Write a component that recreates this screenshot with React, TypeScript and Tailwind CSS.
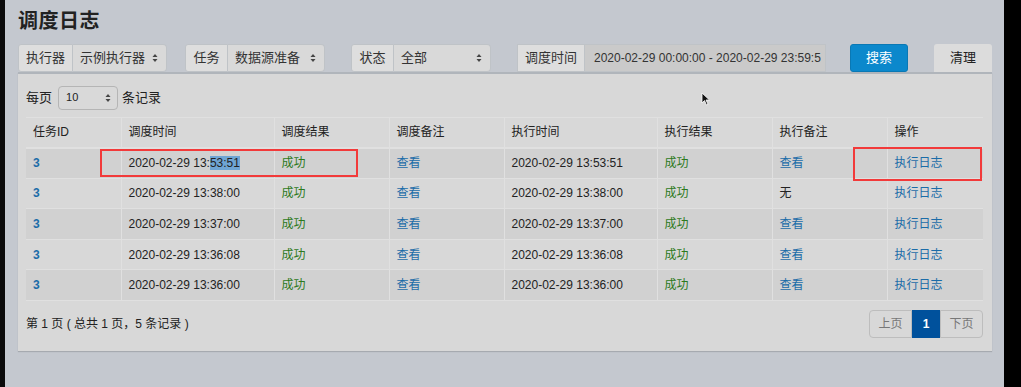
import React from 'react';

const rows = [
  { id: '3', trigger: '2020-02-29 13:53:51', handle: '2020-02-29 13:53:51', note: '查看' },
  { id: '3', trigger: '2020-02-29 13:38:00', handle: '2020-02-29 13:38:00', note: '无' },
  { id: '3', trigger: '2020-02-29 13:37:00', handle: '2020-02-29 13:37:00', note: '查看' },
  { id: '3', trigger: '2020-02-29 13:36:08', handle: '2020-02-29 13:36:08', note: '查看' },
  { id: '3', trigger: '2020-02-29 13:36:00', handle: '2020-02-29 13:36:00', note: '查看' },
];

const cols = ['w-[95px]', 'w-[153px]', 'w-[115px]', 'w-[115px]', 'w-[153px]', 'w-[115px]', 'w-[115px]', 'w-[96px]'];
const heads = ['任务ID', '调度时间', '调度结果', '调度备注', '执行时间', '执行结果', '执行备注', '操作'];

function Arrows() {
  return (
    <svg width="6" height="10" viewBox="0 0 6 10" className="shrink-0">
      <path d="M3 1 L5.5 4 H0.5 Z" fill="#444" />
      <path d="M3 9 L5.5 6 H0.5 Z" fill="#444" />
    </svg>
  );
}

function SelectGroup({ label, value, labelW, selW }: { label: string; value: string; labelW: string; selW: string }) {
  return (
    <div className="flex h-[28px] text-[13px] text-[#333]">
      <div className={`${labelW} flex items-center justify-center bg-[#dedede] border border-[#bfc3c7] rounded-l-[3px]`}>{label}</div>
      <div className={`${selW} flex items-center justify-between pl-[7px] pr-[8px] bg-[#d9d9d9] border border-l-0 border-[#bfc3c7] rounded-r-[4px]`}>
        <span>{value}</span>
        <Arrows />
      </div>
    </div>
  );
}

export default function App() {
  return (
    <div className="flex h-[387px] w-[1021px] overflow-hidden bg-black font-['Liberation_Sans','Noto_Sans_CJK_SC',sans-serif]">
      <div className="w-[5px] shrink-0 bg-[#0a0a0a]" />
      <div className="relative w-[999px] shrink-0 bg-[#c4c8cf] pl-[13px]">
        <h1 className="pt-[8px] h-[44px] text-[20px] leading-[26px] font-bold text-[#222] tracking-[0.5px]">调度日志</h1>

        <div className="flex h-[28px] items-start">
          <SelectGroup label="执行器" value="示例执行器" labelW="w-[55px]" selW="w-[94px]" />
          <div className="ml-[18px]">
            <SelectGroup label="任务" value="数据源准备" labelW="w-[43px]" selW="w-[97px]" />
          </div>
          <div className="ml-[26px]">
            <SelectGroup label="状态" value="全部" labelW="w-[43px]" selW="w-[97px]" />
          </div>
          <div className="ml-[26px] flex h-[28px] text-[13px] text-[#333]">
            <div className="w-[68px] flex items-center justify-center bg-[#dedede] border border-[#bfc3c7]">调度时间</div>
            <div className="w-[241px] flex items-center pl-[9px] bg-[#cacaca] border border-l-0 border-[#bfc3c7] overflow-hidden whitespace-nowrap text-[12px]">
              2020-02-29 00:00:00 - 2020-02-29 23:59:5
            </div>
          </div>
          <div className="ml-[24px] w-[58px] h-[28px] flex items-center justify-center rounded-[3px] bg-[#0b88cc] border border-[#0a78b4] text-white text-[13px]">搜索</div>
          <div className="ml-[26px] w-[58px] h-[28px] flex items-center justify-center rounded-t-[3px] bg-[#dcdcdc] text-[#222] text-[13px]">清理</div>
        </div>

        <div className="w-[974px] h-[279px] bg-[#d8d8d8] border-t-[2px] border-[#b0b5bb] shadow-[0_1px_1px_rgba(0,0,0,0.15)] px-[8px]">
          <div className="flex items-center h-[43px] pt-[4px] text-[13px] text-[#222]">
            <span>每页</span>
            <div className="ml-[6px] w-[60px] h-[24px] flex items-center justify-between pl-[7px] pr-[6px] border border-[#b5b5b5] rounded-[4px] bg-[#d9d9d9] text-[11px]">
              <span>10</span>
              <Arrows />
            </div>
            <span className="ml-[4px]">条记录</span>
          </div>

          <table className="border-collapse text-[12px] text-[#222] border-t border-[#e0e0e0]">
            <thead>
              <tr className="h-[30px] bg-[#d8d8d8]">
                {heads.map((h, i) => (
                  <th key={h} className={`${cols[i]} text-left font-normal pl-[7px] border-r border-b-2 border-[#e0e0e0] last:border-r-0 ${i === 0 ? 'font-bold' : ''}`}>
                    {h}
                  </th>
                ))}
              </tr>
            </thead>
            <tbody>
              {rows.map((r, idx) => (
                <tr key={idx} className={`h-[30.6px] border-b border-[#e0e0e0] ${idx % 2 === 0 ? 'bg-[#d1d1d1]' : 'bg-[#d8d8d8]'}`}>
                  <td className="pl-[7px] border-r border-[#e0e0e0] text-[#1b6ca8] font-bold">{r.id}</td>
                  <td className="pl-[7px] border-r border-[#e0e0e0]">
                    {idx === 0 ? (
                      <>2020-02-29 13:<span className="bg-[#6fa5d4]">53:51</span></>
                    ) : (
                      r.trigger
                    )}
                  </td>
                  <td className="pl-[7px] border-r border-[#e0e0e0] text-[#2d7a1c]">成功</td>
                  <td className="pl-[7px] border-r border-[#e0e0e0] text-[#1b6ca8]">查看</td>
                  <td className="pl-[7px] border-r border-[#e0e0e0]">{r.handle}</td>
                  <td className="pl-[7px] border-r border-[#e0e0e0] text-[#2d7a1c]">成功</td>
                  <td className={`pl-[7px] border-r border-[#e0e0e0] ${r.note === '无' ? 'text-[#222]' : 'text-[#1b6ca8]'}`}>{r.note}</td>
                  <td className="pl-[7px] text-[#1b6ca8]">执行日志</td>
                </tr>
              ))}
            </tbody>
          </table>

          <div className="flex items-center justify-between mt-[9px] w-[957px]">
            <span className="text-[12px] text-[#222]">第 1 页 ( 总共 1 页，5 条记录 )</span>
            <div className="flex h-[28px] text-[12px]">
              <div className="w-[43px] flex items-center justify-center border border-[#bdbdbd] rounded-l-[4px] text-[#777]">上页</div>
              <div className="w-[28px] flex items-center justify-center bg-[#00519c] text-white font-bold">1</div>
              <div className="w-[43px] flex items-center justify-center border border-[#bdbdbd] rounded-r-[4px] text-[#777]">下页</div>
            </div>
          </div>
        </div>

        <div className="absolute left-[95px] top-[149px] w-[258px] h-[28px] border-2 border-[#f23a3a]" />
        <div className="absolute left-[848px] top-[147px] w-[129px] h-[34px] border-2 border-[#f23a3a]" />
        <svg className="absolute left-[696px] top-[92px]" width="9" height="14" viewBox="0 0 9 14">
          <path d="M1 1 V11 L3.5 8.5 L5.5 13 L7 12.3 L5 8 H8.5 Z" fill="#111" stroke="#fff" strokeWidth="0.8" />
        </svg>
      </div>
      <div className="flex-1 bg-black" />
    </div>
  );
}
